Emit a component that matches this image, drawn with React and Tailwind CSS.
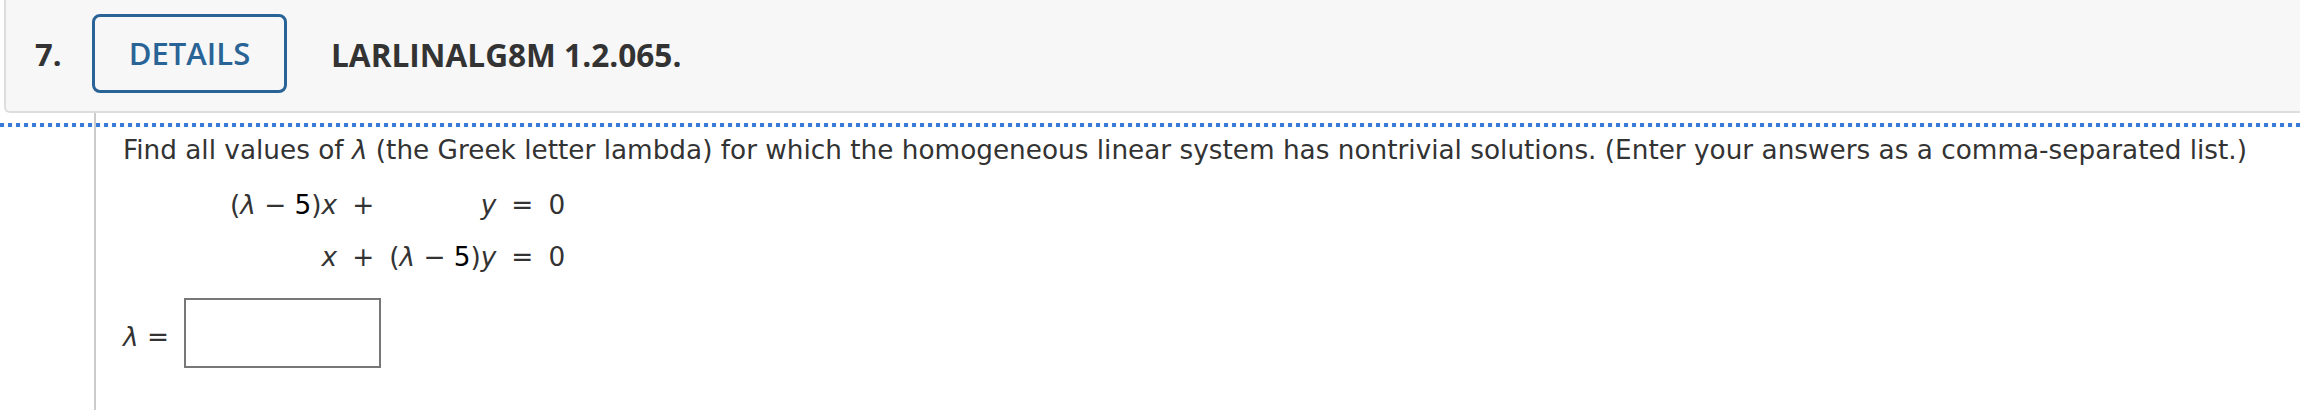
const Lam = () => <span className="italic">λ</span>;

export default function App() {
  return (
    <div className="relative w-[2300px] h-[410px] overflow-hidden bg-white text-[#333]">
      {/* Header */}
      <div className="ml-[4px] h-[113px] bg-[#f7f7f7] border-l-2 border-b-2 border-[#ddd] rounded-bl-[6px] flex items-center pb-[5px] font-['Open_Sans',sans-serif]">
        <span className="ml-[29px] w-[57px] pt-[3px] text-[31px] font-bold text-[#333]">7.</span>
        <button className="w-[195px] h-[79px] border-[3px] border-[#2a6496] rounded-[8px] text-[31px] font-semibold text-[#2a6496]">
          DETAILS
        </button>
        <span className="ml-[44px] pt-[3px] text-[31.6px] font-bold text-[#333]">LARLINALG8M 1.2.065.</span>
      </div>

      {/* focus outline */}
      <div className="absolute left-0 right-0 top-[123px] h-[4px] bg-[repeating-linear-gradient(to_right,#3a7bd8_0_4px,transparent_4px_8px)]" />

      {/* Body */}
      <div className="flex h-[297px] font-['DejaVu_Sans',Verdana,sans-serif] text-[26.3px] text-[#333]">
        <div className="w-[96px] shrink-0 border-r-2 border-[#ccc]" />
        <div className="pl-[27px] pt-[22px]">
          <p className="leading-[30px] whitespace-nowrap">
            Find all values of <Lam /> (the Greek letter lambda) for which the homogeneous linear system has nontrivial solutions. (Enter your answers as a comma-separated list.)
          </p>

          <div className="ml-[107px] mt-[25px] inline-grid grid-cols-[auto_auto_auto_auto_auto] gap-x-[15px] gap-y-[22px] leading-[30px] whitespace-nowrap">
            <span className="text-right">
              (<Lam /> − <span className="text-black">5</span>)<span className="italic">x</span>
            </span>
            <span>+</span>
            <span className="text-right italic">y</span>
            <span>=</span>
            <span>0</span>

            <span className="text-right italic">x</span>
            <span>+</span>
            <span className="text-right">
              (<Lam /> − <span className="text-black">5</span>)<span className="italic">y</span>
            </span>
            <span>=</span>
            <span>0</span>
          </div>

          <div className="mt-[26px] flex items-center gap-[15px]">
            <span className="leading-[30px] pt-[8px]">
              <Lam /> =
            </span>
            <div className="w-[197px] h-[70px] border-2 border-[#777] bg-white" />
          </div>
        </div>
      </div>
    </div>
  );
}
